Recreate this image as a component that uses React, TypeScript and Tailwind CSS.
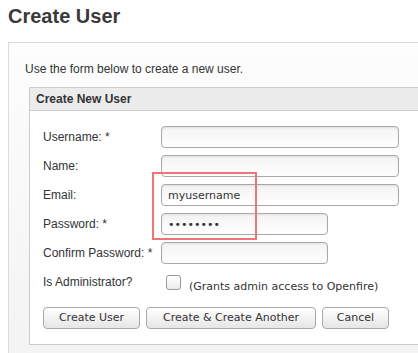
export default function App() {
  const field =
    "h-[22px] rounded-[4px] border border-[#a9a9a9] bg-gradient-to-b from-[#f3f3f3] to-white px-[6px] text-[11px] text-[#333] outline-none shadow-[inset_0_1px_2px_rgba(0,0,0,0.08)] [font-family:'DejaVu_Sans',sans-serif]";
  const btn =
    "h-[22px] rounded-[4px] border border-[#a9a9a9] bg-gradient-to-b from-white to-[#e6e6e6] text-[11px] text-[#333] [font-family:'DejaVu_Sans',sans-serif]";

  return (
    <div className="relative w-[418px] h-[353px] overflow-hidden bg-white text-[#333] [font-family:'Liberation_Sans',Arial,sans-serif]">
      <h1 className="ml-[8px] mt-[4px] text-[20px] font-bold leading-[24px] text-[#3a3a3a]">Create User</h1>

      <div className="ml-[8px] mt-[14px] w-[440px] border border-[#dcdcdc] bg-gradient-to-b from-[#fdfdfd] to-[#f3f3f3] pl-[16px] pt-[18px] pb-[20px]">
        <p className="text-[12px] leading-[16px]">Use the form below to create a new user.</p>

        <div className="ml-[4px] mt-[10px] border border-[#cccccc] bg-white">
          <div className="h-[23px] border-b border-[#cccccc] bg-[#ececec] pl-[6px] text-[12px] font-bold leading-[22px]">
            Create New User
          </div>

          <div className="flex flex-col pl-[13px] pt-[15px] pb-[15px] text-[12px]">
            <div className="flex flex-col gap-[7px]">
              <div className="flex h-[22px] items-center">
                <span className="w-[118px]">Username: *</span>
                <input className={`${field} w-[238px]`} readOnly />
              </div>
              <div className="flex h-[22px] items-center">
                <span className="w-[118px]">Name:</span>
                <input className={`${field} w-[238px]`} readOnly />
              </div>
              <div className="flex h-[22px] items-center">
                <span className="w-[118px]">Email:</span>
                <input className={`${field} w-[238px]`} value="myusername" readOnly />
              </div>
              <div className="flex h-[22px] items-center">
                <span className="w-[118px]">Password: *</span>
                <input type="password" className={`${field} w-[167px]`} value="password" readOnly />
              </div>
              <div className="flex h-[22px] items-center">
                <span className="w-[118px]">Confirm Password: *</span>
                <input type="password" className={`${field} w-[167px]`} readOnly />
              </div>
            </div>

            <div className="mt-[10px] flex items-start leading-[16px]">
              <span className="w-[123px]">Is Administrator?</span>
              <span className="mt-[1px] h-[15px] w-[15px] rounded-[3px] border border-[#9a9a9a] bg-gradient-to-b from-white to-[#ececec]" />
              <span className="ml-[8px] mt-[5px] text-[11px] [font-family:'DejaVu_Sans',sans-serif]">
                (Grants admin access to Openfire)
              </span>
            </div>

            <div className="mt-[12px] flex gap-[6px]">
              <button className={`${btn} w-[97px]`}>Create User</button>
              <button className={`${btn} w-[170px]`}>Create &amp; Create Another</button>
              <button className={`${btn} w-[67px]`}>Cancel</button>
            </div>
          </div>
        </div>
      </div>

      <div className="pointer-events-none absolute left-[152px] top-[172px] h-[68px] w-[105px] border-2 border-[#f37474]" />
    </div>
  );
}
